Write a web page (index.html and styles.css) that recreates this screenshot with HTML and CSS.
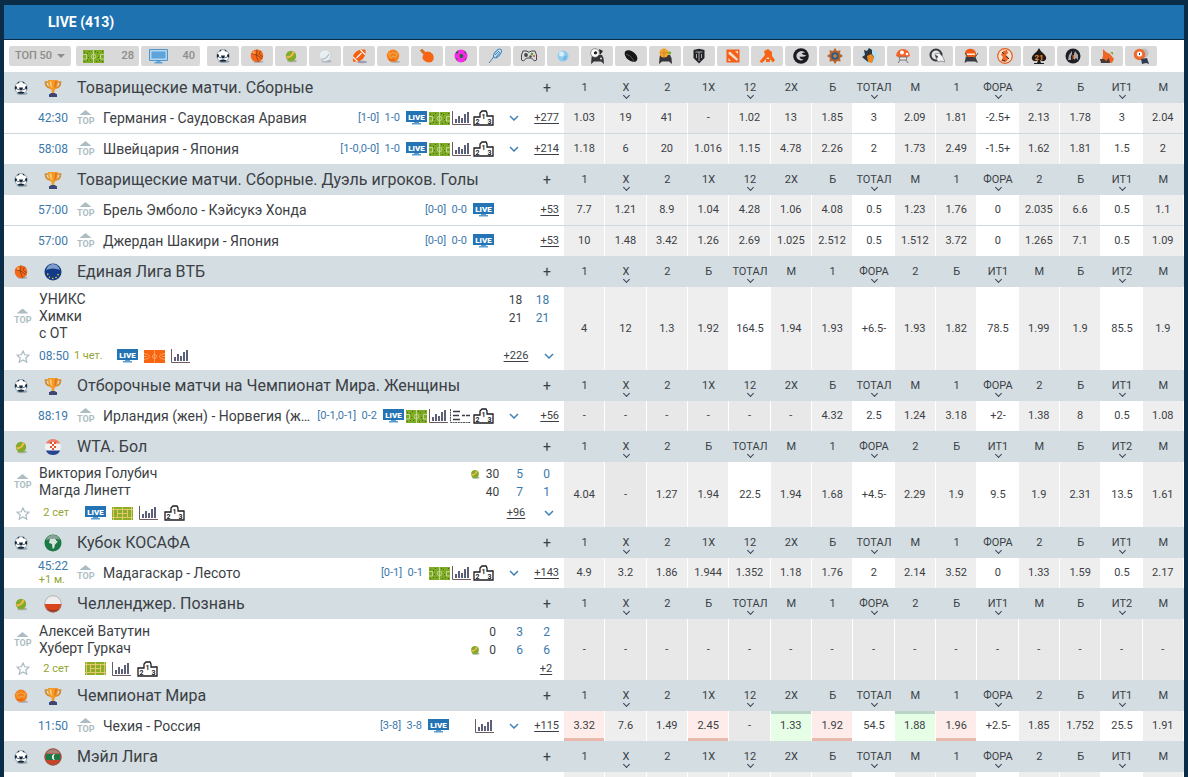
FILE: index.html
```
<!DOCTYPE html>
<html lang="ru">
<head>
<meta charset="utf-8">
<title>LIVE</title>
<link rel="stylesheet" href="styles.css">
</head>
<body>
<svg class="sprite" aria-hidden="true">
  <symbol id="soccer" viewBox="0 0 16 16"><ellipse cx="9" cy="13.500" rx="5.500" ry="1.300" fill="#8fa3ad"/><circle cx="8" cy="7.800" r="6.200" fill="#fff" stroke="#7f929d" stroke-width=".8"/><path d="M6 7.500h4L9.300 10H6.700zM2 6l2 .8-.3 2.500L2 9.500zM14 6l-2 .8.300 2.500 1.700.2zM5 2.200l1.500-.7-.5 1.500-1.800 1zM11 2.200l-1.500-.7.5 1.500 1.800 1zM4.500 12.500l1.500-.7h4l1.500.7-1.500 1.300H6z" fill="#14283c"/><path d="M4 9 6.500 10M12 9 9.500 10M8 10v2" stroke="#14283c" stroke-width=".7"/></symbol>
  <symbol id="basket" viewBox="0 0 16 16"><ellipse cx="9.500" cy="13.800" rx="5" ry="1.100" fill="#a8adb3"/><circle cx="8" cy="7.800" r="6.300" fill="#f5681a"/><path d="M2.500 5.500Q8 6 13.500 11M8 1.500Q6 8 9.500 14M11.500 2.800Q8.500 7 13.800 8.500" fill="none" stroke="#8a3c12" stroke-width=".8"/><circle cx="5" cy="4.500" r="1.500" fill="#f99a4c"/></symbol>
  <symbol id="tennis" viewBox="0 0 16 16"><ellipse cx="9" cy="13" rx="5" ry="1.300" fill="#a9b09c"/><circle cx="8" cy="8" r="5.200" fill="#83ab2b"/><path d="M3.200 8Q8 9 9.500 3.200l2 1.200Q10 9.500 4 10.500z" fill="#f0b84c"/></symbol>
  <symbol id="volley" viewBox="0 0 16 16"><ellipse cx="9.500" cy="13.300" rx="5" ry="1.200" fill="#a9b0b6"/><circle cx="8" cy="7.500" r="5.800" fill="#e9eef1" stroke="#c3cbd0" stroke-width=".6"/><path d="M4 11Q9 12 12 6" fill="none" stroke="#b3bdc4" stroke-width="1.200"/></symbol>
  <symbol id="amfoot" viewBox="0 0 16 16"><ellipse cx="11" cy="14" rx="5" ry="1.200" fill="#9a9fb5"/><path d="M2 13.500Q1 5 7 2.500 11 .8 14.500 1.800 15 8 11.500 11.300 7.500 14.700 2 13.500z" fill="#f45f12"/><path d="m5.500 10 5-5M2 9l4.500 4.500M9.500 2l4.500 4.500" stroke="#fff" stroke-width="1.100"/></symbol>
  <symbol id="hand" viewBox="0 0 16 16"><ellipse cx="10" cy="13.800" rx="5" ry="1.100" fill="#a8adb3"/><circle cx="8" cy="7.800" r="6.200" fill="#f57f1c"/><path d="m4 5 2 1 2-2 2 2 2-1v3l-2 1-2-1-2 2-2-2z" fill="none" stroke="#eab14a" stroke-width=".9"/><path d="M4 12h6" stroke="#e05a12" fill="none"/></symbol>
  <symbol id="pingpong" viewBox="0 0 16 16"><path d="M1 2.500 3 1l3.500 3Q11 2.500 14 6.500q2 5-1.500 7.500-5 1.500-8-2-2-2.500 0-5.500z" fill="#f76413"/><path d="m1 2.500 2-1.500 2.500 2.500L4 5.500z" fill="#c97622"/></symbol>
  <symbol id="futsal" viewBox="0 0 16 16"><circle cx="8" cy="8" r="6.500" fill="#f62be6"/><path d="M6.500 6.500 9 6l1.500 2L9 10H7zM2.500 5l2.500-2.500.5 1.500L4 6zM11 2.500 13.500 5l-1.500.5zM2.500 10l2 .5.5 2zM12 11l1.500-1-1.500 3z" fill="#1c6a35"/></symbol>
  <symbol id="badminton" viewBox="0 0 16 16"><ellipse cx="10.500" cy="5.500" rx="2.600" ry="5.200" transform="rotate(40 10.500 5.500)" fill="#cfe4f2" stroke="#3f86bd"/><path d="m2 15 5-6.500M8 7l4-4M9 9l4-5" stroke="#3f86bd" stroke-width="1" fill="none"/></symbol>
  <symbol id="pad" viewBox="0 0 16 16"><path d="M2 3h4l1 1h2l1-1h4l1.500 4v5l-2 1-3-3h-5l-3 3-2-1V7z" fill="#d9dadb" stroke="#44474b"/><circle cx="5" cy="7" r="1.900" fill="#44474b"/><circle cx="11" cy="6" r="1.200" fill="#5a9b25"/><circle cx="9.500" cy="8.500" r="1.200" fill="#44474b"/><circle cx="13" cy="8" r="1" fill="#df4b21"/></symbol>
  <symbol id="golf" viewBox="0 0 16 16"><circle cx="8" cy="8" r="5.500" fill="#8ecbee"/><circle cx="6.500" cy="6" r="2.500" fill="#d7eefb"/><path d="M9 9h3M8 11h3" stroke="#5fa6d3"/></symbol>
  <symbol id="padsoc" viewBox="0 0 16 16"><path d="M3 7h10l1.500 3 .5 6-3-2.500H5L2 16l.5-6z" fill="#35353c"/><circle cx="6" cy="5" r="4.300" fill="#fff" stroke="#555" stroke-width=".6"/><path d="m5 4 2-1 1.500 2L7 6.500 5 6zM10 1l4 2-3 4M2 3l2-2" fill="#222"/><circle cx="12" cy="10.500" r="1" fill="#ddd"/></symbol>
  <symbol id="puck" viewBox="0 0 16 16"><ellipse cx="8" cy="8" rx="4.600" ry="7.300" transform="rotate(-50 8 8)" fill="#17171a"/><path d="M3 6q5 1 8 7" stroke="#555" fill="none"/></symbol>
  <symbol id="padbask" viewBox="0 0 16 16"><path d="M3 7h10l1.500 3 .5 6-3-2.500H5L2 16l.5-6z" fill="#35353c"/><circle cx="7" cy="5" r="4.500" fill="#f5a32a"/><path d="M3 4q4 3 8 0M7 1v8" stroke="#c0862e" stroke-width=".8" fill="none"/><circle cx="12.500" cy="5" r="1.800" fill="#85ae2d"/></symbol>
  <symbol id="tank" viewBox="0 0 16 16"><path d="M2.500 2 8 .8 13.500 2v8L8 15.500 2.500 10z" fill="#222427"/><path d="M4.500 4h7M8 4v9M5.500 6v4M10.500 6v4" stroke="#b5b9bc" stroke-width=".9" fill="none"/></symbol>
  <symbol id="dota" viewBox="0 0 16 16"><path d="M1.500 1.500h13v13h-13z" fill="#f45f18"/><path d="M3.500 4.500 5 3.500l8 7.500-1 2L3.500 6zM10 3.500l3-.5v3zM3.500 10l2.500 3H3.500z" fill="#f6d9c8"/></symbol>
  <symbol id="hammer" viewBox="0 0 16 16"><path d="m5 3 4-2 4 3v4l3 4-2 2.500L9 9l-6 6-2.500-1.500L6 7z" fill="#f76413"/><path d="M7 11h4v3H7z" fill="#f76413"/></symbol>
  <symbol id="dragon" viewBox="0 0 16 16"><circle cx="8" cy="8" r="7.800" fill="#1c1c20"/><path d="M12.500 4.500Q8 1.500 5 4.500t-.5 6.500q3 2.500 6 .5-3.500 0-4-3 4 1 7-1-3.500-.5-5-2 2-1.500 4-1z" fill="#cfd3d5"/></symbol>
  <symbol id="badge" viewBox="0 0 16 16"><path d="m8 0 2 3 3.500-.8L13 5.700 16 8l-3 2 .6 3.600-3.600-.6-2 3-2-3-3.600.6L3 10 0 8l3-2.300L2.400 2.200 6 3z" fill="#b8642b"/><circle cx="8" cy="8" r="3.800" fill="#315d83"/><path d="M6 8h4M8 6v4" stroke="#f0943c"/></symbol>
  <symbol id="hero" viewBox="0 0 16 16"><circle cx="9" cy="8" r="7.500" fill="#b8dff2"/><path d="M3 2l3 1 2-3 3 2v4l2 3-2 5H7L1 9l3-2z" fill="#31363d"/><path d="m6 8 4-2 3 3-2 6-4-1z" fill="#f1861d"/></symbol>
  <symbol id="mushroom" viewBox="0 0 16 16"><path d="M1 8Q2 1 8 1t7 7q-3 2-7 1-4 1-7-1z" fill="#f2622a"/><circle cx="7" cy="4.500" r="2" fill="#fff"/><circle cx="12" cy="6" r="1.300" fill="#fff"/><path d="M4 9h8l-1 3H5zM3 15l2-3M13 15l-2-3" fill="#eee" stroke="#777"/></symbol>
  <symbol id="helmet" viewBox="0 0 16 16"><circle cx="7" cy="7" r="5.500" fill="#e2e4e5" stroke="#34373c" stroke-width="2"/><path d="m6 6 4-1 4 4 2 5-4-1-3 1-2-4z" fill="#f4f4f4" stroke="#777" stroke-width=".7"/><path d="m6 7 3 1-1 3z" fill="#34373c"/></symbol>
  <symbol id="ninja" viewBox="0 0 16 16"><path d="M3 8h9l3 7-3-1.500H4L1.500 15z" fill="#3a3a44"/><path d="M2 4Q4 .5 8 .8T13 5v4H3z" fill="#ef5a17"/><path d="M4 5.500h8v1.500H4z" fill="#fff0e0"/><path d="m11 11 4-6M2 5l3 4" stroke="#555"/></symbol>
  <symbol id="fighter" viewBox="0 0 16 16"><circle cx="8" cy="8" r="7.300" fill="#f8e3d2" stroke="#e55c1f" stroke-width="1.200"/><path d="m6 3 4-1 1 3-2 2 3 3-3 4-5-1 2-4-2-2z" fill="#e9662a"/><path d="m5 4 2 2M9 8l3 3M5 12l3 1" stroke="#333"/></symbol>
  <symbol id="spade" viewBox="0 0 16 16"><path d="M8 0q1 3 5 6 4 4 1 6.500-2.500 1.500-5-.5l1 3h3v1H3v-1h3l1-3q-2.500 2-5 .5Q-1 10 3 6q4-3 5-6z" fill="#1d1a18"/><text x="8" y="11.500" text-anchor="middle" class="mark orange">21</text></symbol>
  <symbol id="duel" viewBox="0 0 16 16"><circle cx="8" cy="8" r="7.500" fill="#1e1f22"/><path d="m3 12 1-5 3-4v3l-1 2v4zM9 12V6l1-3 3 4v5l-2-2z" fill="#a5a9ac"/><path d="M7.500 7h1.500v4H7.500z" fill="#c9581e"/></symbol>
  <symbol id="horse" viewBox="0 0 16 16"><path d="m4 1 3 3 4 2 4 5-2 4-5-1-6 1 2-7z" fill="#ee6526"/><path d="M1 11h4l2 2 3-3 1 5H2z" fill="#473737"/><path d="M11 4h3v3z" fill="#86a82e"/></symbol>
  <symbol id="wheel" viewBox="0 0 16 16"><circle cx="11" cy="5" r="4.500" fill="#b9bdc1"/><circle cx="6.500" cy="6.500" r="5.800" fill="#ef6a2b"/><circle cx="6.500" cy="6" r="2.600" fill="#fff"/><path d="M6 5h1v2H6zM8 11l6-1 2 6-3-1-4 1z" fill="#2d3c55"/></symbol>
  <symbol id="cup" viewBox="0 0 18 18"><path d="M4.500 3H1.500q0 5 4.500 6M13.500 3h3q0 5-4.500 6" fill="none" stroke="#d98922" stroke-width="1.700"/><path d="M4 1h10q0 8-3.500 10l-.3 3H7.800l-.3-3Q4 9 4 1z" fill="#f09a28"/><path d="M5.500 2.500h2q0 4 1 7Q5.800 8 5.500 2.500z" fill="#f9cf72"/><path d="M11 2h2q0 5-2.500 8z" fill="#ee6f1c"/><path d="M6.500 14h5v1h1.500v3H5v-3h1.500z" fill="#3e4674"/></symbol>
  <symbol id="eu" viewBox="0 0 18 18"><circle cx="9" cy="9" r="8.500" fill="#123a86"/><path d="M2 7Q4 1 9 1t7 6q-7-3-14 0z" fill="#7f9ccb"/><path d="M3.500 10.500Q5 15.500 9 15.500t5.500-5" fill="none" stroke="#f5c93a" stroke-dasharray="1.300 2.200" stroke-width="1.300"/></symbol>
  <symbol id="croatia" viewBox="0 0 18 18"><circle cx="9" cy="9" r="8" fill="#f3f3f3"/><path d="M1.800 5.500Q4 1 9 1t7.200 4.500z" fill="#e8806c"/><path d="M1.800 12.500Q4 17 9 17t7.200-4.500z" fill="#26458e"/><path d="M6 4h6v6q-3 4-6 0z" fill="#fff"/><path d="M6 4h2v2h2V4h2v2h-2v2h2v2h-2V8H8v2H6V8h2V6H6zM8 10h2v2H8z" fill="#e8532e"/></symbol>
  <symbol id="africa" viewBox="0 0 18 18"><circle cx="9" cy="9" r="8.500" fill="#1d7a46"/><path d="M2 6q2-5 7-5t7 5q-3-2-7-1.500T2 6z" fill="#8ba397"/><path d="m6 5 5-.5 2 3h1l-3 3-1 4H8.500L8 10 5 9z" fill="#d9e4dd"/></symbol>
  <symbol id="poland" viewBox="0 0 18 18"><path d="M.5 9a8.500 8.500 0 0 1 17 0z" fill="#ededed"/><path d="M.5 9a8.500 8.500 0 0 0 17 0z" fill="#d8441c"/><path d="M2 13.500a8.500 8.500 0 0 0 14 0q-7 3-14 0z" fill="#9a3a24"/><circle cx="9" cy="9" r="8.300" fill="none" stroke="#a08c88" stroke-width=".6"/></symbol>
  <symbol id="maldives" viewBox="0 0 18 18"><circle cx="9" cy="9" r="8.500" fill="#c5452a"/><path d="M2 6h14v6H2z" fill="#1d7a46"/><path d="M2 5.500q3-4.500 7-4.500t7 4.500z" fill="#a98278"/><path d="M11 6a3 3 0 1 0 0 6 4 4 0 0 1 0-6z" fill="#fff"/><circle cx="9" cy="9" r="8.200" fill="none" stroke="#84564c" stroke-width=".8"/></symbol>
  <symbol id="livetv" viewBox="0 0 21 14"><path d="M0 0h21v11H0z" fill="#2474b5"/><path d="M8 11h5v1h2v1.500H6V12h2z" fill="#5a9bd0"/><text x="10.500" y="8.500" text-anchor="middle" class="live-mark">LIVE</text></symbol>
  <symbol id="field" viewBox="0 0 21 13"><path d="M0 0h21v13H0z" fill="#7fab24"/><path d="M1 2h1v1H1zM6 1h1v1H6zM14 2h1v1h-1zM19 1h1v1h-1zM7 10h1v1H7zM1 11h1v1H1zM13 11h1v1h-1zM19 11h1v1h-1zM5 7h1v1H5zM15 7h1v1h-1zM4 3h1v1H4zM16 10h1v1h-1zM4 10h1v1H4zM12 1h1v1h-1z" fill="#3f6f14"/><path d="M10.500 0v13M0 4.500h3.500v4.500H0M21 4.500h-3.500v4.500H21" stroke="#cfe0a8" fill="none" stroke-width=".8"/><circle cx="10.500" cy="6.500" r="2.200" fill="none" stroke="#cfe0a8" stroke-width=".8"/></symbol>
  <symbol id="bfield" viewBox="0 0 21 13"><path d="M0 0h21v13H0z" fill="#f8640f"/><path d="M10.500 0v13M0 3.500Q5.500 4 5.500 6.500T0 9.500M21 3.500Q15.500 4 15.500 6.500T21 9.500M0 6.500h3M18 6.500h3" stroke="#fbb070" fill="none" stroke-width=".8"/><circle cx="10.500" cy="6.500" r="2" fill="none" stroke="#fbb070" stroke-width=".8"/></symbol>
  <symbol id="tfield" viewBox="0 0 21 13"><path d="M0 0h21v13H0z" fill="#8cae27"/><path d="M0 2.500h21M0 10.500h21M5.500 2.500v8M15.500 2.500v8M10.500 0v13M5.500 6.500h10M1.500 0v13M19.500 0v13" stroke="#ecc878" fill="none" stroke-width=".9"/></symbol>
  <symbol id="tv" viewBox="0 0 21 15"><path d="M1.500.5h18v11h-18z" fill="#b3d6f0" stroke="#4f97cc"/><path d="M3.500 2.500h14v7h-14z" fill="#5ea4da"/><path d="M8.500 12h4v1h2v1.500h-8V13h2z" fill="#5ea4da"/></symbol>
  <symbol id="stats" viewBox="0 0 19 14"><path d="M.5 0v13.500H19" fill="none" stroke="#6d5a60"/><path d="M3 8h2v4H3zM6 5h2v7H6zM9 7h2v5H9zM12 3h2v9h-2zM15 1h2v11h-2z" fill="#5b6078"/></symbol>
  <symbol id="list" viewBox="0 0 21 14"><path d="M.5 0v13.500H21" fill="none" stroke="#555" stroke-dasharray="2 .6"/><path d="M3 2.500h7M3 6.500h6M3 10.500h7M12 6.500h3M16 6.500h4" stroke="#3b3b4a" stroke-width="1.400"/></symbol>
  <symbol id="podium" viewBox="0 0 21 16"><path d="M1 15V7h6V3l2-2h4l1 2v3h6v9z" fill="#fff" stroke="#1b1b22" stroke-width="1.300"/><text x="10.500" y="9" text-anchor="middle" class="mark">1</text><text x="4.500" y="14" text-anchor="middle" class="mark">2</text><text x="16.500" y="14" text-anchor="middle" class="mark">3</text></symbol>
  <symbol id="chev" viewBox="0 0 10 6"><path d="m1 1 4 4 4-4" fill="none" stroke="currentColor" stroke-width="1.500"/></symbol>
  <symbol id="star" viewBox="0 0 14 13"><path d="m7 1 1.700 3.800 4.300.4-3.200 2.800 1 4.200L7 10l-3.800 2.200 1-4.200L1 5.200l4.300-.4z" fill="none" stroke="#a9bac1" stroke-width="1.200"/></symbol>
</svg>

<main class="board">
  <h1 class="title">LIVE (413)</h1>

  <nav class="filters">
    <button class="chip top50">ТОП 50<i class="caret"></i></button>
    <button class="chip counter wide"><svg class="i-field"><use href="#field"/></svg>28</button>
    <button class="chip counter"><svg class="i-tv"><use href="#tv"/></svg>40</button>
    <div class="sports">
      <button class="chip" aria-label="Футбол"><svg><use href="#soccer"/></svg></button>
      <button class="chip" aria-label="Баскетбол"><svg><use href="#basket"/></svg></button>
      <button class="chip" aria-label="Теннис"><svg><use href="#tennis"/></svg></button>
      <button class="chip" aria-label="Волейбол"><svg><use href="#volley"/></svg></button>
      <button class="chip" aria-label="Американский футбол"><svg><use href="#amfoot"/></svg></button>
      <button class="chip" aria-label="Гандбол"><svg><use href="#hand"/></svg></button>
      <button class="chip" aria-label="Настольный теннис"><svg><use href="#pingpong"/></svg></button>
      <button class="chip" aria-label="Футзал"><svg><use href="#futsal"/></svg></button>
      <button class="chip" aria-label="Бадминтон"><svg><use href="#badminton"/></svg></button>
      <button class="chip" aria-label="Киберспорт"><svg><use href="#pad"/></svg></button>
      <button class="chip" aria-label="Гольф"><svg><use href="#golf"/></svg></button>
      <button class="chip" aria-label="FIFA"><svg><use href="#padsoc"/></svg></button>
      <button class="chip" aria-label="Хоккей"><svg><use href="#puck"/></svg></button>
      <button class="chip" aria-label="NBA 2K"><svg><use href="#padbask"/></svg></button>
      <button class="chip" aria-label="World of Tanks"><svg><use href="#tank"/></svg></button>
      <button class="chip" aria-label="Dota"><svg><use href="#dota"/></svg></button>
      <button class="chip" aria-label="Молот"><svg><use href="#hammer"/></svg></button>
      <button class="chip" aria-label="Mortal Kombat"><svg><use href="#dragon"/></svg></button>
      <button class="chip" aria-label="Hearthstone"><svg><use href="#badge"/></svg></button>
      <button class="chip" aria-label="Герои"><svg><use href="#hero"/></svg></button>
      <button class="chip" aria-label="Mario"><svg><use href="#mushroom"/></svg></button>
      <button class="chip" aria-label="Шлем"><svg><use href="#helmet"/></svg></button>
      <button class="chip" aria-label="Ниндзя"><svg><use href="#ninja"/></svg></button>
      <button class="chip" aria-label="Бои"><svg><use href="#fighter"/></svg></button>
      <button class="chip" aria-label="21"><svg><use href="#spade"/></svg></button>
      <button class="chip" aria-label="Injustice"><svg><use href="#duel"/></svg></button>
      <button class="chip" aria-label="Скачки"><svg><use href="#horse"/></svg></button>
      <button class="chip" aria-label="Лото"><svg><use href="#wheel"/></svg></button>
    </div>
  </nav>

  <table class="events">
    <colgroup><col class="col-event"><col span="15"></colgroup>

    <tbody>
      <tr class="league">
        <th><div class="league-name"><svg><use href="#soccer"/></svg><svg class="flag"><use href="#cup"/></svg><span>Товарищеские матчи. Сборные</span><button>+</button></div>
        <th>1<th><button>X</button><th>2<th>1X<th><button>12</button><th>2X<th>Б<th><button>ТОТАЛ</button><th>М<th>1<th><button>ФОРА</button><th>2<th>Б<th><button>ИТ1</button><th>М
      <tr class="odds">
        <td><div class="match"><span class="time">42:30</span><span class="top">TOP</span><span class="name">Германия - Саудовская Аравия</span><span class="score">[1-0]&nbsp; 1-0</span><span class="icons"><svg class="i-live"><use href="#livetv"/></svg><svg class="i-field"><use href="#field"/></svg><svg class="i-stats"><use href="#stats"/></svg><svg class="i-podium"><use href="#podium"/></svg></span><button class="open" aria-label="Ещё"><svg><use href="#chev"/></svg></button><a class="more" href="#">+277</a></div>
        <td>1.03<td>19<td>41<td class="off">-<td>1.02<td>13<td>1.85<td>3<td>2.09<td>1.81<td>-2.5+<td>2.13<td>1.78<td>3<td>2.04
      <tr class="odds">
        <td><div class="match"><span class="time">58:08</span><span class="top">TOP</span><span class="name">Швейцария - Япония</span><span class="score">[1-0,0-0]&nbsp; 1-0</span><span class="icons"><svg class="i-live"><use href="#livetv"/></svg><svg class="i-field"><use href="#field"/></svg><svg class="i-stats"><use href="#stats"/></svg><svg class="i-podium"><use href="#podium"/></svg></span><button class="open" aria-label="Ещё"><svg><use href="#chev"/></svg></button><a class="more" href="#">+214</a></div>
        <td>1.18<td>6<td>20<td>1.016<td>1.15<td>4.78<td>2.26<td>2<td>1.73<td>2.49<td>-1.5+<td>1.62<td>1.81<td>1.5<td>2
    </tbody>

    <tbody>
      <tr class="league">
        <th><div class="league-name"><svg><use href="#soccer"/></svg><svg class="flag"><use href="#cup"/></svg><span>Товарищеские матчи. Сборные. Дуэль игроков. Голы</span><button>+</button></div>
        <th>1<th><button>X</button><th>2<th>1X<th><button>12</button><th>2X<th>Б<th><button>ТОТАЛ</button><th>М<th>1<th><button>ФОРА</button><th>2<th>Б<th><button>ИТ1</button><th>М
      <tr class="odds">
        <td><div class="match"><span class="time">57:00</span><span class="top">TOP</span><span class="name">Брель Эмболо - Кэйсукэ Хонда</span><span class="score">[0-0]&nbsp; 0-0</span><span class="icons"><svg class="i-live"><use href="#livetv"/></svg></span><span class="open"></span><a class="more" href="#">+53</a></div>
        <td>7.7<td>1.21<td>8.9<td>1.04<td>4.28<td>1.06<td>4.08<td>0.5<td>1.23<td>1.76<td>0<td>2.035<td>6.6<td>0.5<td>1.1
      <tr class="odds">
        <td><div class="match"><span class="time">57:00</span><span class="top">TOP</span><span class="name">Джердан Шакири - Япония</span><span class="score">[0-0]&nbsp; 0-0</span><span class="icons"><svg class="i-live"><use href="#livetv"/></svg></span><span class="open"></span><a class="more" href="#">+53</a></div>
        <td>10<td>1.48<td>3.42<td>1.26<td>2.69<td>1.025<td>2.512<td>0.5<td>1.512<td>3.72<td>0<td>1.265<td>7.1<td>0.5<td>1.09
    </tbody>

    <tbody>
      <tr class="league">
        <th><div class="league-name"><svg><use href="#basket"/></svg><svg class="flag"><use href="#eu"/></svg><span>Единая Лига ВТБ</span><button>+</button></div>
        <th>1<th><button>X</button><th>2<th>Б<th><button>ТОТАЛ</button><th>М<th>1<th><button>ФОРА</button><th>2<th>Б<th><button>ИТ1</button><th>М<th>Б<th><button>ИТ2</button><th>М
      <tr class="odds totals">
        <td><div class="card">
          <div class="teams"><span class="top">TOP</span><p>УНИКС<br>Химки<br>с ОТ</p>
            <div class="sets"><b>18</b><i>18</i><b>21</b><i>21</i></div></div>
          <div class="foot"><button class="fav" aria-label="В избранное"><svg><use href="#star"/></svg></button><span class="clock">08:50</span><span class="period">1 чет.</span><span class="icons"><svg class="i-live"><use href="#livetv"/></svg><svg class="i-field"><use href="#bfield"/></svg><svg class="i-stats"><use href="#stats"/></svg></span><a class="more" href="#">+226</a><button class="open" aria-label="Ещё"><svg><use href="#chev"/></svg></button></div>
        </div>
        <td>4<td>12<td>1.3<td>1.92<td>164.5<td>1.94<td>1.93<td>+6.5-<td>1.93<td>1.82<td>78.5<td>1.99<td>1.9<td>85.5<td>1.9
    </tbody>

    <tbody>
      <tr class="league">
        <th><div class="league-name"><svg><use href="#soccer"/></svg><svg class="flag"><use href="#cup"/></svg><span>Отборочные матчи на Чемпионат Мира. Женщины</span><button>+</button></div>
        <th>1<th><button>X</button><th>2<th>1X<th><button>12</button><th>2X<th>Б<th><button>ТОТАЛ</button><th>М<th>1<th><button>ФОРА</button><th>2<th>Б<th><button>ИТ1</button><th>М
      <tr class="odds">
        <td><div class="match"><span class="time">88:19</span><span class="top">TOP</span><span class="name">Ирландия (жен) - Норвегия (ж...</span><span class="score">[0-1,0-1]&nbsp; 0-2</span><span class="icons"><svg class="i-live"><use href="#livetv"/></svg><svg class="i-field"><use href="#field"/></svg><svg class="i-stats"><use href="#stats"/></svg><svg class="i-list"><use href="#list"/></svg><svg class="i-podium"><use href="#podium"/></svg></span><button class="open" aria-label="Ещё"><svg><use href="#chev"/></svg></button><a class="more" href="#">+56</a></div>
        <td class="off">-<td class="off">-<td class="off">-<td class="off">-<td class="off">-<td class="off">-<td>4.32<td>2.5<td>1.24<td>3.18<td>+2-<td>1.38<td>8<td>0.5<td>1.08
    </tbody>

    <tbody>
      <tr class="league">
        <th><div class="league-name"><svg><use href="#tennis"/></svg><svg class="flag"><use href="#croatia"/></svg><span>WTA. Бол</span><button>+</button></div>
        <th>1<th><button>X</button><th>2<th>Б<th><button>ТОТАЛ</button><th>М<th>1<th><button>ФОРА</button><th>2<th>Б<th><button>ИТ1</button><th>М<th>Б<th><button>ИТ2</button><th>М
      <tr class="odds totals">
        <td><div class="card snug">
          <div class="teams"><span class="top">TOP</span><p>Виктория Голубич<br>Магда Линетт</p>
            <div class="sets three"><svg><use href="#tennis"/></svg><b>30</b><i>5</i><i>0</i><span></span><b>40</b><i>7</i><i>1</i></div></div>
          <div class="foot"><button class="fav" aria-label="В избранное"><svg><use href="#star"/></svg></button><span class="period lone">2 сет</span><span class="icons"><svg class="i-live"><use href="#livetv"/></svg><svg class="i-field"><use href="#tfield"/></svg><svg class="i-stats"><use href="#stats"/></svg><svg class="i-podium"><use href="#podium"/></svg></span><a class="more" href="#">+96</a><button class="open" aria-label="Ещё"><svg><use href="#chev"/></svg></button></div>
        </div>
        <td>4.04<td class="off">-<td>1.27<td>1.94<td>22.5<td>1.94<td>1.68<td>+4.5-<td>2.29<td>1.9<td>9.5<td>1.9<td>2.31<td>13.5<td>1.61
    </tbody>

    <tbody>
      <tr class="league">
        <th><div class="league-name"><svg><use href="#soccer"/></svg><svg class="flag"><use href="#africa"/></svg><span>Кубок КОСАФА</span><button>+</button></div>
        <th>1<th><button>X</button><th>2<th>1X<th><button>12</button><th>2X<th>Б<th><button>ТОТАЛ</button><th>М<th>1<th><button>ФОРА</button><th>2<th>Б<th><button>ИТ1</button><th>М
      <tr class="odds">
        <td><div class="match"><span class="time">45:22<small>+1 м.</small></span><span class="top">TOP</span><span class="name">Мадагаскар - Лесото</span><span class="score">[0-1]&nbsp; 0-1</span><span class="icons"><svg class="i-field"><use href="#field"/></svg><svg class="i-stats"><use href="#stats"/></svg><svg class="i-podium"><use href="#podium"/></svg></span><button class="open" aria-label="Ещё"><svg><use href="#chev"/></svg></button><a class="more" href="#">+143</a></div>
        <td>4.9<td>3.2<td>1.86<td>1.944<td>1.352<td>1.18<td>1.76<td>2<td>2.14<td>3.52<td>0<td>1.33<td>1.59<td>0.5<td>2.17
    </tbody>

    <tbody>
      <tr class="league">
        <th><div class="league-name"><svg><use href="#tennis"/></svg><svg class="flag"><use href="#poland"/></svg><span>Челленджер. Познань</span><button>+</button></div>
        <th>1<th><button>X</button><th>2<th>Б<th><button>ТОТАЛ</button><th>М<th>1<th><button>ФОРА</button><th>2<th>Б<th><button>ИТ1</button><th>М<th>Б<th><button>ИТ2</button><th>М
      <tr class="odds suspended">
        <td><div class="card low">
          <div class="teams"><span class="top">TOP</span><p>Алексей Ватутин<br>Хуберт Гуркач</p>
            <div class="sets three"><span></span><b>0</b><i>3</i><i>2</i><svg><use href="#tennis"/></svg><b>0</b><i>6</i><i>6</i></div></div>
          <div class="foot"><button class="fav" aria-label="В избранное"><svg><use href="#star"/></svg></button><span class="period lone">2 сет</span><span class="icons"><svg class="i-field"><use href="#tfield"/></svg><svg class="i-stats"><use href="#stats"/></svg><svg class="i-podium"><use href="#podium"/></svg></span><a class="more" href="#">+2</a></div>
        </div>
        <td>-<td>-<td>-<td>-<td>-<td>-<td>-<td>-<td>-<td>-<td>-<td>-<td>-<td>-<td>-
    </tbody>

    <tbody>
      <tr class="league">
        <th><div class="league-name"><svg><use href="#hand"/></svg><svg class="flag"><use href="#cup"/></svg><span>Чемпионат Мира</span><button>+</button></div>
        <th>1<th><button>X</button><th>2<th>1X<th><button>12</button><th>2X<th>Б<th><button>ТОТАЛ</button><th>М<th>1<th><button>ФОРА</button><th>2<th>Б<th><button>ИТ1</button><th>М
      <tr class="odds">
        <td><div class="match"><span class="time">11:50</span><span class="top">TOP</span><span class="name">Чехия - Россия</span><span class="score">[3-8]&nbsp; 3-8</span><span class="icons spaced"><svg class="i-live"><use href="#livetv"/></svg><svg class="i-stats"><use href="#stats"/></svg></span><button class="open" aria-label="Ещё"><svg><use href="#chev"/></svg></button><a class="more" href="#">+115</a></div>
        <td class="down">3.32<td>7.6<td>1.49<td class="down">2.45<td class="off">-<td class="up">1.33<td class="down">1.92<td>54.5<td class="up">1.88<td class="down">1.96<td>+2.5-<td>1.85<td>1.752<td>25.5<td>1.91
    </tbody>

    <tbody>
      <tr class="league">
        <th><div class="league-name"><svg><use href="#soccer"/></svg><svg class="flag"><use href="#maldives"/></svg><span>Мэйл Лига</span><button>+</button></div>
        <th>1<th><button>X</button><th>2<th>1X<th><button>12</button><th>2X<th>Б<th><button>ТОТАЛ</button><th>М<th>1<th><button>ФОРА</button><th>2<th>Б<th><button>ИТ1</button><th>М
      <tr class="odds">
        <td><div class="match"></div>
        <td><td><td><td><td><td><td><td><td><td><td><td><td><td><td>
    </tbody>
  </table>
</main>
</body>
</html>
```

FILE: styles.css
```
* { box-sizing: border-box; }

html { scrollbar-width: none; }

body {
  margin: 0;
  padding: 5px 4px 0;
  background: #0a2c47;
  color: #3c3f45;
  font: 12px/16px Roboto, "Liberation Sans", sans-serif;
}

button {
  padding: 0;
  border: 0;
  background: none;
  color: inherit;
  font: inherit;
  cursor: pointer;
}

svg { display: block; flex: none; width: 16px; height: 16px; }
.sprite { position: absolute; width: 0; height: 0; }
.mark { fill: #1b1b22; font-size: 7px; font-weight: 700; }
.mark.orange { fill: #f18a25; font-size: 8px; }
.live-mark { fill: #fff; font-size: 8px; font-weight: 900; }

.board { background: #fff; }

.title {
  margin: 0;
  padding: 0 44px;
  background: #1f72b0;
  border-bottom: 1px solid #0a2c47;
  color: #fff;
  font-size: 14px;
  font-weight: 700;
  line-height: 34px;
}

/* Filter bar */
.filters {
  display: flex;
  gap: 2px;
  padding: 6px 5px;
}
.chip {
  display: flex;
  align-items: center;
  justify-content: center;
  height: 20px;
  background: #d9d9d9;
  border-radius: 2px;
  color: #8c8c88;
  font-size: 11px;
  font-weight: 500;
}
.top50 { width: 62px; gap: 5px; margin-right: 3px; }
.caret { border: 4px solid transparent; border-top-color: #8c8c88; border-bottom: 0; }
.counter { width: 59px; padding: 0 5px 0 7px; justify-content: space-between; }
.counter.wide { width: 63px; }
.sports { display: flex; gap: 2px; margin-left: 5px; }
.sports .chip { width: 32px; }

/* Icons */
.i-live { width: 21px; height: 14px; }
.i-field { width: 21px; height: 13px; }
.i-tv { width: 21px; height: 15px; }
.i-stats { width: 19px; height: 14px; }
.i-list { width: 21px; height: 14px; }
.i-podium { width: 21px; height: 16px; }

/* Events table */
.events {
  width: 100%;
  table-layout: fixed;
  border-spacing: 0;
}
.col-event { width: 560px; }
th, td { padding: 0; text-align: center; }

.league th {
  position: relative;
  height: 31px;
  background: #d3dde2;
  font-size: 11px;
  font-weight: 400;
}
.league th > button::after {
  content: "";
  position: absolute;
  left: 50%;
  bottom: 5px;
  width: 4px;
  height: 4px;
  margin-left: -2px;
  border: solid #3c4258;
  border-width: 0 1px 1px 0;
  transform: rotate(45deg);
}
.league-name {
  display: flex;
  align-items: center;
  padding: 0 9px;
  text-align: left;
}
.league-name .flag { width: 18px; height: 18px; margin: 0 15px; }
.league-name span { flex: 1; font-size: 16px; }
.league-name button { width: 16px; font-size: 14px; }

.odds td {
  background: #eee;
  border-right: 1px solid #fff;
  font-size: 11px;
}
.odds td:first-child,
.odds td:nth-child(9),
.odds td:nth-child(12),
.odds td:nth-child(15),
.totals td:nth-child(6) { background: #fff; border-right: 0; }
.odds + .odds td { border-top: 1px solid #cbd9de; }
.odds td.off,
.suspended td:nth-child(n+2) { background: #e8e8e8; border-right: 1px solid #fff; }
.odds td.down { background: #fdecea; box-shadow: inset 0 -3px #e8baae; }
.odds td.up { background: #e6fde6; box-shadow: inset 0 3px #bad4c8; }

.top {
  width: 17px;
  color: #aebdc3;
  font-size: 9px;
  font-weight: 700;
  line-height: 9px;
  text-align: center;
}
.top::before {
  content: "";
  display: block;
  width: 12px;
  height: 5px;
  margin: 0 auto 2px;
  background: #aebdc3;
  clip-path: polygon(50% 0, 100% 100%, 0 100%);
}

.more { color: #3c3f45; font-size: 11px; text-underline-offset: 2px; }
.open { display: flex; justify-content: center; color: #3f82b8; }
.open svg { width: 10px; height: 6px; }
.icons { display: flex; align-items: center; gap: 2px; }
.icons.spaced { gap: 26px; }

/* One-line event */
.match {
  display: flex;
  align-items: center;
  height: 30px;
  padding-right: 5px;
  text-align: left;
}
.time {
  width: 64px;
  margin-right: 9px;
  color: #3b79ac;
  font-size: 12px;
  line-height: 13px;
  text-align: right;
}
.time small { display: block; padding-right: 3px; color: #93a532; font-size: 11px; }
.name {
  flex: 1;
  margin: 0 6px 0 9px;
  overflow: hidden;
  font-size: 14px;
  text-overflow: ellipsis;
  white-space: nowrap;
}
.score { margin-right: 6px; color: #3b79ac; font-size: 11px; }
.match .open { width: 40px; }
.match .more { display: flex; justify-content: flex-end; width: 25px; }

/* Multi-line event */
.card { padding: 4px 0 0 10px; text-align: left; }
.card.snug { padding-top: 3px; }
.teams { display: flex; align-items: center; gap: 8px; }
.teams p { flex: 1; margin: 0; font-size: 14px; line-height: 17px; }
.sets {
  display: grid;
  grid-template-columns: 27px 27px;
  align-self: flex-start;
  height: 34px;
  padding-right: 8px;
  font-size: 12px;
  line-height: 18px;
  text-align: center;
}
.sets.three { grid-template-columns: 10px 27px 27px 27px; padding-right: 4px; }
.sets svg { width: 12px; height: 12px; align-self: center; }
.sets b { font-weight: 400; }
.sets i { color: #3b79ac; font-style: normal; }
.foot { display: flex; align-items: center; height: 28px; }
.low .foot { height: 23px; }
.fav { width: 17px; margin-right: 8px; }
.fav svg { width: 14px; height: 13px; margin: 0 auto; }
.clock { margin-right: 5px; color: #3b79ac; font-size: 12px; }
.period { color: #93a532; font-size: 11px; }
.period.lone { width: 30px; margin-right: 2px; text-align: right; }
.foot .icons { flex: 1; gap: 6px; margin-left: 14px; }
.foot .more { width: 36px; text-align: center; }
.foot .open { width: 30px; }
```
